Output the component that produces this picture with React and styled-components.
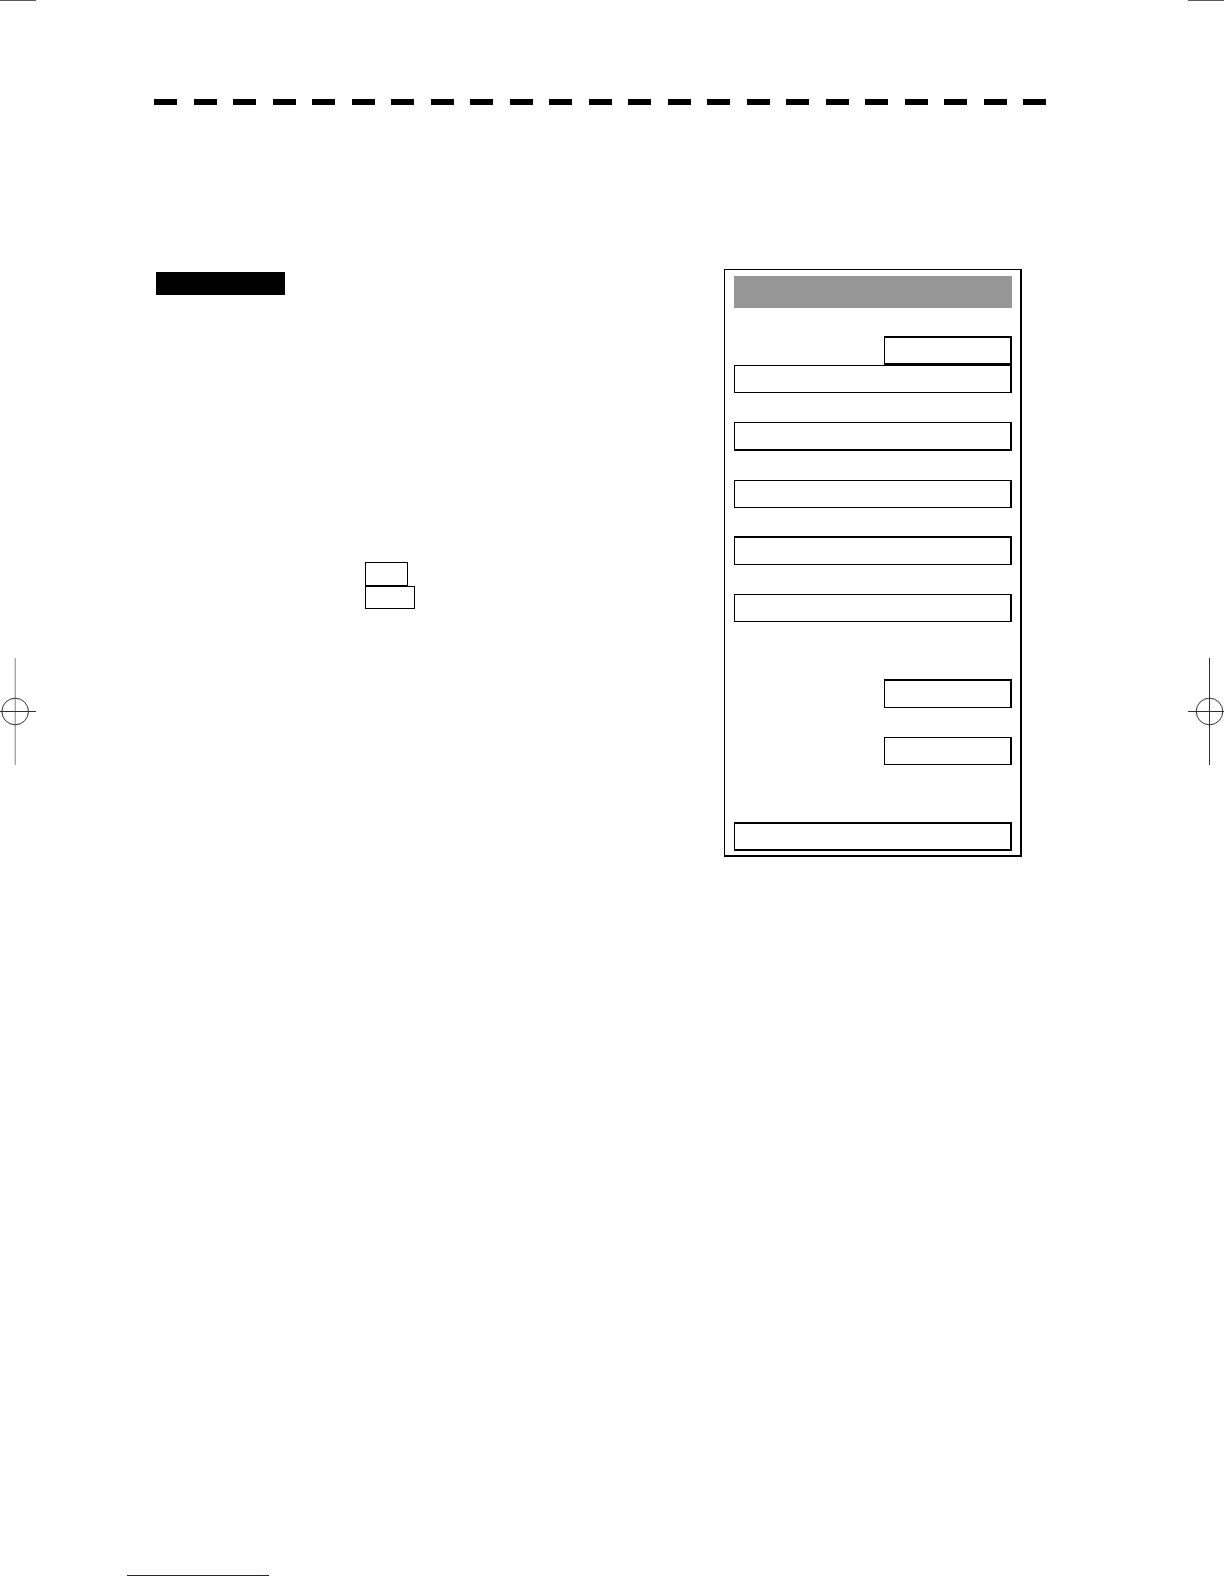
import styled, { createGlobalStyle } from 'styled-components';

const colors = {
    ink: '#000000',
    bar: '#969696',
    mark: '#303030',
    markLight: '#808080',
    crop: '#5a5a5a',
    link: '#1a1a96',
}

const GlobalStyle = createGlobalStyle`
    * {
        box-sizing: border-box;
    }

    body {
        margin: 0;
        background: #ffffff;
        font-family: "Liberation Sans", Arial, sans-serif;
    }
`

const Page = styled.div`
    display: grid;
    grid-template-columns: 36px 1fr 36px;
    min-height: 100vh;
`

const PageEdge = styled.div`
    display: flex;
    flex-direction: column;
    gap: 657px;
`

const CropMark = styled.div`
    height: 1px;
    background: ${colors.crop};
`

const Sheet = styled.div`
    display: flex;
    flex-direction: column;
    padding: 99px 142px 8px 91px;
`

const DashedRule = styled.div`
    display: flex;
    justify-content: space-between;
    height: 6px;
    margin-left: 27px;
`

const Dash = styled.span`
    width: 23px;
    background: ${colors.ink};
`

const Main = styled.main`
    display: flex;
    justify-content: space-between;
    align-items: flex-start;
    padding: 164px 24px 0 29px;
`

const Description = styled.section`
    display: flex;
    flex-direction: column;
    align-items: flex-start;
    gap: 267px;
    padding-top: 3px;
`

const SectionTag = styled.div`
    width: 129px;
    height: 23px;
    background: ${colors.ink};
`

const KeyList = styled.div`
    display: flex;
    flex-direction: column;
    padding-left: 209px;
`

const Key = styled.button`
    width: ${({ $wide }) => ($wide ? '50px' : '43px')};
    height: ${({ $wide }) => ($wide ? '23px' : '24px')};
    padding: 0;
    border: 1px solid ${colors.ink};
    border-radius: 0;
    background: #ffffff;
`

const Panel = styled.form`
    display: flex;
    flex-direction: column;
    width: 298px;
    padding: 6px 8px 4px 9px;
    border: solid ${colors.ink};
    border-width: 1px 2px 2px 1px;
`

const PanelBar = styled.div`
    height: 32px;
    background: ${colors.bar};
`

const Field = styled.input`
    align-self: flex-end;
    width: ${({ $half }) => ($half ? '128px' : '100%')};
    height: ${({ $top, $bottom }) => ($top + $bottom > 2 ? '29px' : '28px')};
    margin: ${({ $space }) => $space}px 0 0;
    padding: 0 6px;
    border: solid ${colors.ink};
    border-width: ${({ $top, $bottom }) => `${$top}px 2px ${$bottom}px 1px`};
    border-radius: 0;
    background: #ffffff;
    font: inherit;
    font-size: 14px;
`

const Footer = styled.footer`
    display: flex;
    margin-top: auto;
`

const FooterLink = styled.a`
    width: 142px;
    height: 16px;
    border-bottom: 1px solid ${colors.link};
`

const fields = [
    { space: 28, half: true, top: 2, bottom: 2 },
    { space: 0, top: 1, bottom: 1 },
    { space: 29, top: 1, bottom: 2 },
    { space: 29, top: 1, bottom: 1 },
    { space: 28, top: 2, bottom: 1 },
    { space: 29, top: 1, bottom: 1 },
    { space: 57, half: true, top: 2, bottom: 1 },
    { space: 29, half: true, top: 1, bottom: 1 },
    { space: 57, top: 2, bottom: 2 },
]

function RegistrationMark({ center, color }){
    return (
        <svg width="36" height="107" viewBox="0 0 36 107" fill="none" aria-hidden="true">
            <path d={`M${center} 0V107`} stroke={color} />
            <path d="M0 53.5H36" stroke={colors.mark} />
            <circle cx={center} cy="53.5" r="13.3" stroke={colors.mark} />
        </svg>
    )
}

function SettingsPanel(){
    return (
        <Panel>
            <PanelBar />
            {fields.map((field, index) => (
                <Field
                    key={index}
                    type="text"
                    aria-label={`Field ${index + 1}`}
                    $space={field.space}
                    $half={field.half}
                    $top={field.top}
                    $bottom={field.bottom}
                />
            ))}
        </Panel>
    )
}

function App(){
    return (
        <>
            <GlobalStyle />
            <Page>
                <PageEdge>
                    <CropMark />
                    <RegistrationMark center={15.2} color={colors.markLight} />
                </PageEdge>
                <Sheet>
                    <DashedRule>
                        {Array.from({ length: 23 }, (_, index) => (
                            <Dash key={index} />
                        ))}
                    </DashedRule>
                    <Main>
                        <Description>
                            <SectionTag />
                            <KeyList>
                                <Key type="button" aria-label="Key 1" />
                                <Key type="button" aria-label="Key 2" $wide />
                            </KeyList>
                        </Description>
                        <SettingsPanel />
                    </Main>
                    <Footer>
                        <FooterLink href="#" aria-label="Footer link" />
                    </Footer>
                </Sheet>
                <PageEdge>
                    <CropMark />
                    <RegistrationMark center={21.5} color={colors.mark} />
                </PageEdge>
            </Page>
        </>
    )
}

export default App;
